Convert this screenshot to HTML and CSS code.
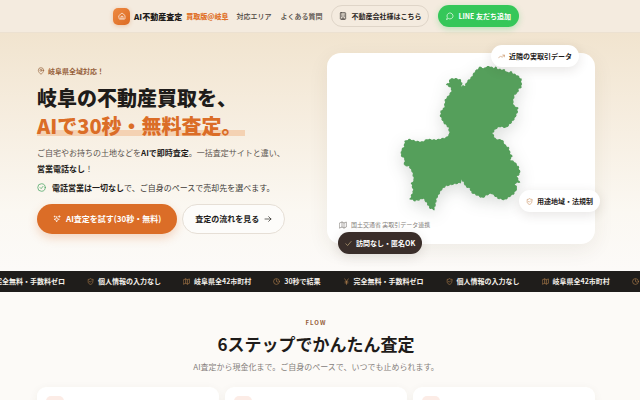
FILE: index.html
```html
<!DOCTYPE html>
<html lang="ja">
<head>
    <meta charset="UTF-8">
    <meta name="viewport" content="width=device-width, initial-scale=1.0">
    <title>AI不動産査定 買取版@岐阜</title>
    <link rel="stylesheet" href="styles.css">
</head>
<body>
    <!-- Icon set -->
    <svg class="sprite" aria-hidden="true">
        <symbol id="i-home" viewBox="0 0 24 24"><path d="M3 10.5 12 3l9 7.5V20a1 1 0 0 1-1 1H4a1 1 0 0 1-1-1z"/><path d="M9 21v-8h6v8"/></symbol>
        <symbol id="i-building" viewBox="0 0 24 24"><rect x="4" y="2" width="16" height="20" rx="2"/><path d="M9 22v-4h6v4M8 6h.01M12 6h.01M16 6h.01M8 10h.01M12 10h.01M16 10h.01M8 14h.01M12 14h.01M16 14h.01"/></symbol>
        <symbol id="i-chat" viewBox="0 0 24 24"><path d="M7.9 20A9 9 0 1 0 4 16.1L2 22z"/></symbol>
        <symbol id="i-pin" viewBox="0 0 24 24"><path d="M20 10c0 5-5.500 10.200-8 12-2.500-1.800-8-7-8-12a8 8 0 0 1 16 0z"/><circle cx="12" cy="10" r="3"/></symbol>
        <symbol id="i-check-circle" viewBox="0 0 24 24"><circle cx="12" cy="12" r="10"/><path d="m8 12 3 3 5-6"/></symbol>
        <symbol id="i-sparkle" viewBox="0 0 24 24"><path d="M11 5 9 11l-6 2 6 2 2 6 2-6 6-2-6-2zM19 2v5M16.500 4.500h5M5 3v3M3.500 4.500h3"/></symbol>
        <symbol id="i-arrow" viewBox="0 0 24 24"><path d="M3 12h18M14 5l7 7-7 7"/></symbol>
        <symbol id="i-trend" viewBox="0 0 24 24"><path d="m2 17 7-7 5 5 8-8"/><path d="M16 7h6v6"/></symbol>
        <symbol id="i-shield" viewBox="0 0 24 24"><path d="M20 13c0 5-3.500 7.500-8 9-4.500-1.500-8-4-8-9V5c3 0 6-1.200 8-3 2 1.800 5 3 8 3z"/><path d="m8.500 12 2.500 2.500 4.500-4.500"/></symbol>
        <symbol id="i-map" viewBox="0 0 24 24"><path d="m2 6 7-3 6 3 7-3v15l-7 3-6-3-7 3zM9 3v15M15 6v15"/></symbol>
        <symbol id="i-clock" viewBox="0 0 24 24"><circle cx="12" cy="12" r="10"/><path d="M12 6v6l4 2"/></symbol>
        <symbol id="i-yen" viewBox="0 0 24 24"><path d="m6 3 6 9 6-9M12 12v10M7 13h10M7 17h10"/></symbol>
        <symbol id="i-check" viewBox="0 0 24 24"><path d="m3 13 6 6L21 5"/></symbol>
    </svg>

    <!-- Header -->
    <header class="header">
        <a class="brand" href="#">
            <span class="brand-mark"><svg class="icon"><use href="#i-home"/></svg></span>
            <span>AI不動産査定</span>
            <span class="brand-sub">買取版@岐阜</span>
        </a>
        <nav class="nav">
            <a class="nav-link" href="#area">対応エリア</a>
            <a class="nav-link" href="#faq">よくある質問</a>
            <a class="pill pill-outline" href="#company"><svg class="icon"><use href="#i-building"/></svg>不動産会社様はこちら</a>
            <a class="pill pill-line" href="#line"><svg class="icon"><use href="#i-chat"/></svg>LINE 友だち追加</a>
        </nav>
    </header>

    <!-- Hero -->
    <section class="hero">
        <div class="hero-text">
            <p class="area"><svg class="icon"><use href="#i-pin"/></svg>岐阜県全域対応！</p>
            <h1>岐阜の不動産買取を、<br><span class="marker">AIで30秒・無料査定。</span></h1>
            <p class="lead">ご自宅やお持ちの土地などを<strong>AIで即時査定</strong>。一括査定サイトと違い、<br><strong>営業電話なし</strong>！</p>
            <p class="promise"><svg class="icon"><use href="#i-check-circle"/></svg><span><strong>電話営業は一切なし</strong>で、ご自身のペースで売却先を選べます。</span></p>
            <div class="actions">
                <button type="button" class="button button-primary"><svg class="icon"><use href="#i-sparkle"/></svg>AI査定を試す(30秒・無料)</button>
                <button type="button" class="button button-ghost">査定の流れを見る<svg class="icon"><use href="#i-arrow"/></svg></button>
            </div>
        </div>

        <div class="map-card">
            <svg class="gifu" viewBox="27 15 372 450" role="img" aria-label="岐阜県の地図">
                <path d="M270 22 283 26 290 20 303 20 310 25 318 22 325 28 345 30 352 38 365 36 372 42 385 48 395 58 396 82 387 88 385 98 375 105 370 125 372 138 385 146 383 160 375 178 365 190 350 205 330 202 316 210 308 222 312 232 318 241 338 243 345 257 357 267 362 285 368 293 360 303 375 310 387 325 392 343 382 355 390 371 375 375 383 390 372 407 345 425 325 420 305 405 290 410 278 419 245 403 240 390 228 385 220 370 214 363 210 373 190 377 165 383 152 395 138 420 134 440 130 455 118 450 108 433 98 420 85 425 72 428 58 422 68 397 62 375 70 365 65 340 55 323 40 320 42 300 30 290 32 273 40 263 42 247 55 241 75 247 95 249 110 241 135 243 165 237 170 234 178 225 175 205 160 190 150 170 152 155 162 145 165 120 178 105 185 92 180 82 168 75 178 68 178 58 195 56 210 60 215 70 213 80 225 78 232 65 245 52 255 35Z"/>
            </svg>
            <p class="source"><svg class="icon"><use href="#i-map"/></svg>国土交通省 実取引データ連携</p>
            <span class="badge badge-deals"><svg class="icon"><use href="#i-trend"/></svg>近隣の実取引データ</span>
            <span class="badge badge-zoning"><svg class="icon"><use href="#i-shield"/></svg>用途地域・法規制</span>
            <span class="badge badge-private"><svg class="icon"><use href="#i-check"/></svg>訪問なし・匿名OK</span>
        </div>
    </section>

    <!-- Ticker -->
    <div class="ticker">
        <ul class="ticker-track">
            <li><svg class="icon"><use href="#i-yen"/></svg>完全無料・手数料ゼロ</li>
            <li><svg class="icon"><use href="#i-shield"/></svg>個人情報の入力なし</li>
            <li><svg class="icon"><use href="#i-map"/></svg>岐阜県全42市町村</li>
            <li><svg class="icon"><use href="#i-clock"/></svg>30秒で結果</li>
            <li><svg class="icon"><use href="#i-yen"/></svg>完全無料・手数料ゼロ</li>
            <li><svg class="icon"><use href="#i-shield"/></svg>個人情報の入力なし</li>
            <li><svg class="icon"><use href="#i-map"/></svg>岐阜県全42市町村</li>
            <li><svg class="icon"><use href="#i-clock"/></svg></li>
        </ul>
    </div>

    <!-- Flow -->
    <section class="flow">
        <p class="eyebrow">FLOW</p>
        <h2>6ステップでかんたん査定</h2>
        <p class="flow-lead">AI査定から現金化まで。ご自身のペースで、いつでも止められます。</p>
        <div class="steps">
            <div class="step"><div class="step-icon"></div></div>
            <div class="step"><div class="step-icon"></div></div>
            <div class="step"><div class="step-icon"></div></div>
        </div>
    </section>
</body>
</html>
```
FILE: styles.css
```css
/* Basic page styling */
* {
    box-sizing: border-box;
}

body {
    margin: 0;
    font-family: "Noto Sans CJK JP", sans-serif;
    font-size: 8px;
    color: #1f1c1a;
    background: #fcfaf7;
}

h1, h2, p, ul {
    margin: 0;
    padding: 0;
}

a {
    color: inherit;
    text-decoration: none;
}

.sprite {
    display: none;
}

.icon {
    width: 8px;
    height: 8px;
    flex: none;
    fill: none;
    stroke: currentColor;
    stroke-width: 2;
    stroke-linecap: round;
    stroke-linejoin: round;
}

/* Header */
.header {
    display: flex;
    justify-content: center;
    align-items: center;
    gap: 8px;
    height: 33px;
    padding-right: 8px;
    background: #f4ebdf;
    border-bottom: 1px solid #ece1d1;
    white-space: nowrap;
}

.brand {
    display: flex;
    align-items: center;
    gap: 4px;
    font-weight: 900;
}

.brand-mark {
    display: grid;
    place-items: center;
    width: 17px;
    height: 17px;
    border-radius: 5px;
    color: #fff;
    background: linear-gradient(135deg, #ee8a42, #dc6a22);
    box-shadow: 0 1px 4px rgba(220, 106, 34, 0.3);
}

.brand-sub {
    font-size: 7px;
    color: #e0722c;
}

.nav {
    display: flex;
    align-items: center;
    gap: 9px;
    font-size: 7px;
    font-weight: 500;
    color: #4d4642;
}

.pill {
    display: flex;
    align-items: center;
    gap: 4px;
    height: 22px;
    padding: 0 7px;
    border-radius: 11px;
    font-weight: 700;
}

.pill-outline {
    color: #2b2623;
    border: 1px solid #dfd5c8;
}

.pill-line {
    padding: 0 8px;
    color: #fff;
    background: #35c759;
    box-shadow: 0 2px 6px rgba(53, 199, 89, 0.3);
}

/* Hero */
.hero {
    display: grid;
    grid-template-columns: 253fr 268fr;
    gap: 37px;
    align-items: center;
    padding: 20px 45px 27px 37px;
    background: linear-gradient(#f1e4cf, #f6eddf 35%, #fbf8f2 75%, #fcfaf8);
}

.hero-text {
    padding-top: 2px;
    white-space: nowrap;
}

.area {
    display: flex;
    align-items: center;
    gap: 3px;
    margin-bottom: 8px;
    font-size: 7px;
    line-height: 10px;
    font-weight: 700;
    color: #96603a;
}

h1 {
    margin-bottom: 5px;
    font-size: 20px;
    line-height: 28px;
    font-weight: 900;
}

.marker {
    padding-right: 3px;
    color: #db6d27;
    background: linear-gradient(transparent 66%, #f4d2b3 66%, #f4d2b3 86%, transparent 86%);
}

.lead {
    margin-bottom: 5px;
    line-height: 16px;
    color: #5c5550;
}

strong {
    font-weight: 700;
    color: #1f1c1a;
}

.promise {
    display: flex;
    align-items: center;
    gap: 6px;
    margin-bottom: 10px;
    line-height: 12px;
    color: #403a36;
}

.promise .icon {
    width: 9px;
    height: 9px;
    color: #4aa564;
}

.actions {
    display: flex;
    gap: 5px;
}

.button {
    display: flex;
    align-items: center;
    justify-content: center;
    gap: 5px;
    height: 30px;
    padding: 0 14px;
    border: none;
    border-radius: 15px;
    font-family: inherit;
    font-size: 8px;
    font-weight: 700;
    white-space: nowrap;
    cursor: pointer;
}

.button-primary {
    padding: 0 16px;
    color: #fff;
    background: #db6d27;
    box-shadow: 0 4px 10px rgba(219, 109, 39, 0.25);
}

.button-ghost {
    padding: 0 12px;
    color: #1f1c1a;
    background: #fdfcfa;
    border: 1px solid #e6dfd6;
}

/* Map card */
.map-card {
    position: relative;
    display: flex;
    flex-direction: column;
    align-items: center;
    padding: 12px 12px 14px;
    border-radius: 14px;
    background: #fff;
    box-shadow: 0 6px 20px rgba(80, 60, 40, 0.08);
}

.gifu {
    height: 148px;
    fill: #559f5b;
    stroke: #559f5b;
    stroke-width: 4;
    stroke-linecap: round;
    stroke-dasharray: 4 9;
    filter: drop-shadow(0 5px 8px rgba(40, 50, 40, 0.16));
}

.source {
    display: flex;
    align-items: center;
    align-self: flex-start;
    gap: 4px;
    margin-top: 7px;
    font-size: 6px;
    line-height: 10px;
    color: #85807b;
}

.badge {
    position: absolute;
    display: flex;
    align-items: center;
    gap: 4px;
    height: 22px;
    padding: 0 7px;
    border-radius: 11px;
    font-size: 7px;
    font-weight: 700;
    white-space: nowrap;
    background: #fff;
    box-shadow: 0 3px 12px rgba(60, 45, 30, 0.12);
}

.badge .icon {
    width: 7px;
    height: 7px;
    color: #c48a58;
}

.badge-deals {
    top: -8px;
    right: 16px;
}

.badge-zoning {
    top: 137px;
    right: -5px;
}

.badge-private {
    left: 11px;
    bottom: -10px;
    color: #fff;
    background: #3a2e2a;
}

.badge-private .icon {
    color: #d9c08a;
}

/* Ticker */
.ticker {
    overflow: hidden;
    background: #1f1d1b;
}

.ticker-track {
    display: flex;
    gap: 22px;
    margin-left: -16px;
    list-style: none;
    font-size: 7px;
    line-height: 21px;
    font-weight: 700;
    white-space: nowrap;
    color: #f4f0ea;
}

.ticker-track li {
    display: flex;
    align-items: center;
    gap: 4px;
}

.ticker-track .icon {
    width: 7px;
    height: 7px;
    color: #b98450;
}

/* Flow */
.flow {
    padding: 26px 45px 30px 37px;
    text-align: center;
}

.eyebrow {
    font-size: 6px;
    line-height: 10px;
    font-weight: 700;
    letter-spacing: 1px;
    color: #96603a;
}

h2 {
    margin-top: 4px;
    font-size: 17px;
    line-height: 24px;
    font-weight: 700;
}

.flow-lead {
    margin-top: 5px;
    line-height: 12px;
    color: #85807b;
}

.steps {
    display: grid;
    grid-template-columns: repeat(3, 1fr);
    gap: 6px;
    margin-top: 14px;
}

.step {
    padding: 9px;
    border-radius: 9px;
    background: #fff;
    box-shadow: 0 2px 10px rgba(80, 60, 40, 0.06);
}

.step-icon {
    width: 18px;
    height: 18px;
    border-radius: 5px;
    background: #fcece6;
}
```
